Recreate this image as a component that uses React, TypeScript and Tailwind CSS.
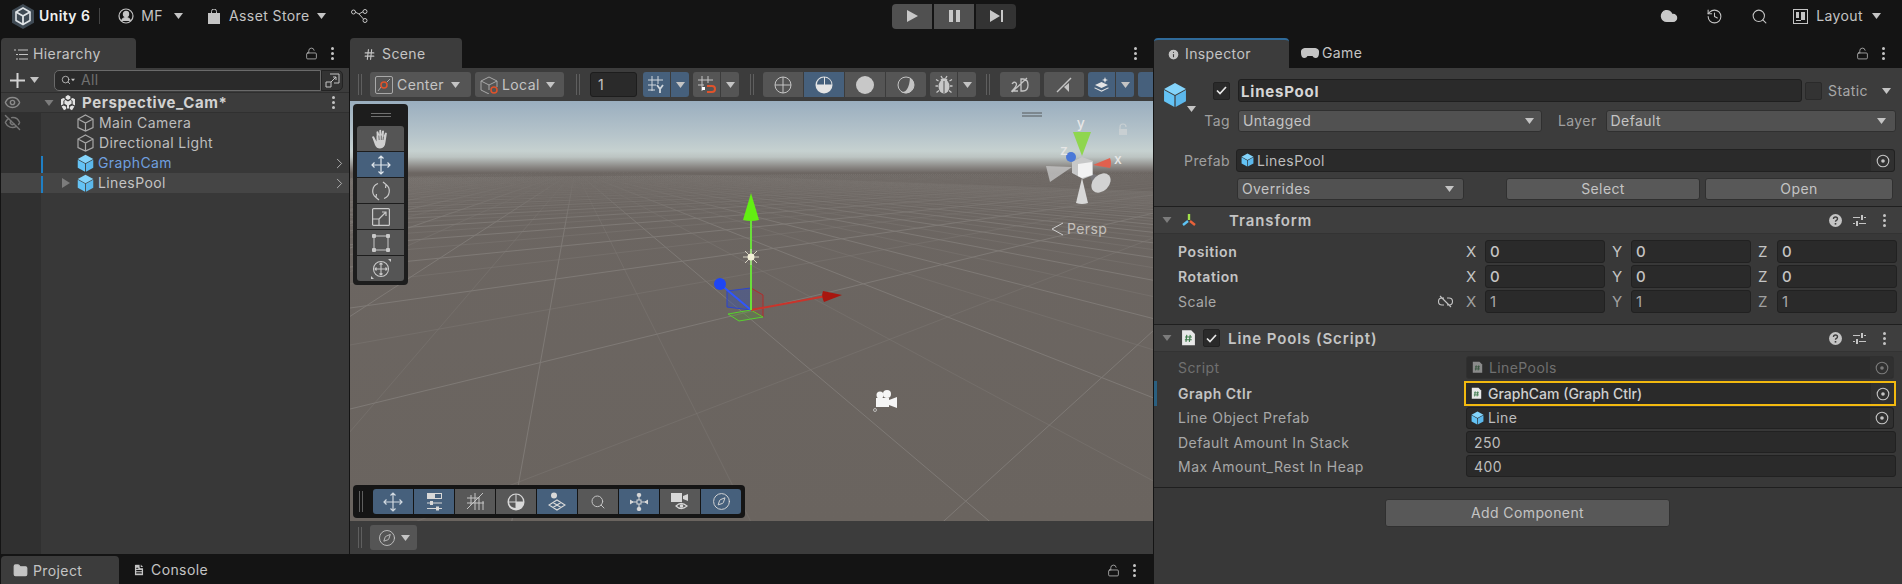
import React from 'react';
import { ChevronRight, Cloud, Compass, Eye, EyeOff, FileText, Folder, Hash, History, Info, LockOpen, Search } from 'lucide-react';

const Caret = ({ color = '#c4c4c4', w = 9 }: { color?: string; w?: number }) => (
  <svg width={w} height={6} viewBox="0 0 9 6" className="shrink-0">
    <path d="M0 0h9L4.5 6z" fill={color} />
  </svg>
);

const Kebab = ({ className = '' }: { className?: string }) => (
  <div className={`flex flex-col gap-[2px] ${className}`}>
    <span className="w-[3px] h-[3px] rounded-full bg-[#c4c4c4]" />
    <span className="w-[3px] h-[3px] rounded-full bg-[#c4c4c4]" />
    <span className="w-[3px] h-[3px] rounded-full bg-[#c4c4c4]" />
  </div>
);

const Handle = ({ className = '' }: { className?: string }) => (
  <div className={`flex gap-[2px] h-[21px] shrink-0 ${className}`}>
    <span className="w-px bg-[#5f5f5f]" />
    <span className="w-px bg-[#5f5f5f]" />
  </div>
);

const Cube = ({ size = 16 }: { size?: number }) => (
  <svg width={size} height={size * 1.08} viewBox="0 0 24 26" className="shrink-0">
    <path d="M12 1l11 6-11 6L1 7z" fill="#84d4fb" />
    <path d="M1 8l10.4 5.7V25L1 19.4z" fill="#64c3f5" />
    <path d="M23 8l-10.4 5.7V25L23 19.4z" fill="#5cb8ec" />
  </svg>
);

const CubeOutline = () => (
  <svg width={17} height={18} viewBox="0 0 17 18" fill="none" stroke="#a8a8a8" strokeWidth="1.2" className="shrink-0">
    <path d="M8.5 1L16 5v8.5L8.5 17 1 13.5V5zM1 5l7.5 4L16 5M8.5 9v8" />
  </svg>
);

const UnityMark = ({ size = 16, color = '#e4e4e4' }: { size?: number; color?: string }) => (
  <svg width={size} height={size} viewBox="0 0 16 16" className="shrink-0" fill={color}>
    <path d="M8 0l2.4 1.4v2.2L8 5 5.6 3.6V1.4zM1 4.2l2.3-1.3 2 1.1L3.4 6v3.2L1 10.5zM15 4.2l-2.3-1.3-2 1.1L12.6 6v3.2l2.4 1.3zM8 6.6l2.6-1.5 1 .6v3l-2.6 1.5v3l-1 .6-1-.6v-3L4.4 8.7v-3l1-.6zM1.6 11.6l2.2-1.2 2.4 1.4v2.3L4 15.3zM14.4 11.6l-2.2-1.2-2.4 1.4v2.3l2.2 1.2z" />
  </svg>
);

const UnityLogo = () => (
  <svg width={22} height={25} viewBox="0 0 22 25" className="shrink-0">
    <path d="M11 0l11 6.2v12.6L11 25 0 18.8V6.2z" fill="#3f4a54" />
    <path d="M11 4l7 4v8.5l-7 4-7-4V8z" fill="none" stroke="#dfe3e6" strokeWidth="1.6" />
    <path d="M4 8l7 4 7-4M11 12v8.5" fill="none" stroke="#dfe3e6" strokeWidth="1.8" />
  </svg>
);

const ScriptIcon = ({ size = 14, dim = false }: { size?: number; dim?: boolean }) => (
  <svg width={size} height={size * 1.15} viewBox="0 0 14 16" className={`shrink-0 ${dim ? 'opacity-50' : ''}`}>
    <path d="M1 1h8.5L13 4.5V15H1z" fill="#e8e8e8" />
    <path d="M5.4 5.5l-.8 6.5M8.6 5.5L7.8 12M3.8 7.4h6.4M3.6 10h6.4" stroke="#3d7a4a" strokeWidth="1.1" fill="none" />
  </svg>
);

const Target = ({ dim = false }: { dim?: boolean }) => (
  <div className="w-[23px] self-stretch bg-[#303030] flex items-center justify-center shrink-0 rounded-r-[3px]">
    <svg width={14} height={14} viewBox="0 0 14 14" className={dim ? 'opacity-50' : ''}>
      <circle cx="7" cy="7" r="5.8" fill="none" stroke="#c4c4c4" strokeWidth="1.1" />
      <circle cx="7" cy="7" r="1.8" fill="#c4c4c4" />
    </svg>
  </div>
);

const Check = () => (
  <svg width={11} height={9} viewBox="0 0 11 9" fill="none" stroke="#e8e8e8" strokeWidth="1.7">
    <path d="M1 4.500l3 3 6-6.500" />
  </svg>
);

const Btn = ({ w, blue, children, className = '' }: { w: number; blue?: boolean; children?: React.ReactNode; className?: string }) => (
  <div
    className={`h-[25px] flex items-center justify-center shrink-0 ${blue ? 'bg-[#46607c]' : 'bg-[#555555]'} ${className}`}
    style={{ width: w }}
  >
    {children}
  </div>
);

const HierRow = ({ children, hover, marked }: { children: React.ReactNode; hover?: boolean; marked?: boolean }) => (
  <div className={`h-5 flex ${hover ? 'bg-[#454545]' : ''}`}>
    <div className={`w-[40px] shrink-0 ${hover ? '' : 'bg-[#303030]'}`} />
    <div className={`w-[2px] mt-[3px] shrink-0 ${marked ? 'bg-[#1f7fc4]' : ''}`} />
    <div className="flex-1 flex items-center">{children}</div>
  </div>
);

const ToolCell = ({ blue, children }: { blue?: boolean; children: React.ReactNode }) => (
  <div className={`w-[47px] h-[25px] flex items-center justify-center ${blue ? 'bg-[#46607c]' : 'bg-[#555555]'}`}>{children}</div>
);

const OverlayBtn = ({ blue, children }: { blue?: boolean; children: React.ReactNode }) => (
  <div className={`w-[40px] h-[25px] flex items-center justify-center ${blue ? 'bg-[#46607c]' : 'bg-[#585858]'}`}>{children}</div>
);

const VecField = ({ label, value, strong }: { label: string; value: string; strong?: boolean }) => (
  <div className="flex items-center">
    <span className={`w-[19px] text-[15px] ${strong ? 'text-[#c4c4c4]' : 'text-[#a0a0a0]'}`}>{label}</span>
    <div className={`w-[120px] h-[23px] bg-[#2a2a2a] border border-[#212121] rounded-[3px] flex items-center pl-[4px] text-[15px] ${strong ? 'font-medium text-[#c4c4c4]' : 'text-[#a8a8a8]'}`}>
      {value}
    </div>
  </div>
);

const VecRow = ({ name, strong, x, y, z, extra }: { name: string; strong?: boolean; x: string; y: string; z: string; extra?: React.ReactNode }) => (
  <div className="h-[25px] flex items-center pl-[24px] pr-[5px]">
    <span className={`flex-1 ${strong ? 'font-semibold text-[#c4c4c4] tracking-[0.6px]' : 'text-[#a8a8a8]'}`}>{name}</span>
    {extra}
    <div className="flex gap-[7px]">
      <VecField label="X" value={x} strong={strong} />
      <VecField label="Y" value={y} strong={strong} />
      <VecField label="Z" value={z} strong={strong} />
    </div>
  </div>
);

const CompActions = () => (
  <div className="flex items-center text-[#c4c4c4]">
    <svg width={13} height={13} viewBox="0 0 13 13">
      <circle cx="6.500" cy="6.500" r="6.500" fill="#c4c4c4" />
      <path d="M4.500 5q0-2 2-2t2 1.800q0 1-1 1.500t-1 1.400" fill="none" stroke="#3e3e3e" strokeWidth="1.400" />
      <rect x="5.700" y="9" width="1.600" height="1.600" fill="#3e3e3e" />
    </svg>
    <svg className="ml-[11px]" width={13} height={12} viewBox="0 0 13 12" fill="none" stroke="#c4c4c4">
      <path d="M0 3.500h7M11 3.500h2M0 9.500h2M6 9.500h7" />
      <rect x="8" y="1" width="2" height="5" fill="#c4c4c4" stroke="none" />
      <rect x="3" y="7" width="2" height="5" fill="#c4c4c4" stroke="none" />
    </svg>
    <Kebab className="ml-[17px]" />
  </div>
);

const HandIcon = () => (
  <svg width={18} height={20} viewBox="0 0 18 20" fill="#cfcfcf">
    <path d="M2 7.500l2.500 5V7a1 1 0 0 1 .2-.6L4.500 3a1 1 0 0 1 1.800-.2l1 3V1.500a1 1 0 0 1 1.900 0V6l.9-4a1 1 0 0 1 1.900.4L11.500 7.500 13 4a1 1 0 0 1 1.800.8L13.500 13q-.5 6-5.500 6.500-3.500 0-5-3.500L.5 9a1 1 0 0 1 1.500-1.500z" />
    <path d="M6.800 6.500l.4 4.500M9.300 6.500V11M11.500 7.500L11 11" stroke="#555" strokeWidth="0.8" fill="none" />
  </svg>
);

const BugIcon = () => (
  <svg width={18} height={19} viewBox="0 0 18 19" fill="#c8c8c8" stroke="#c8c8c8">
    <ellipse cx="9" cy="11.500" rx="5.500" ry="7" stroke="none" />
    <path d="M5.500 4.500q3.500-2.500 7 0L12 6H6z" stroke="none" />
    <path d="M6 1l1.500 2.500M12 1l-1.500 2.500M3.500 6L1 4.500M14.500 6L17 4.500M3 11H.5M15 11h2.500M4 15.500l-2.500 2M14 15.500l2.500 2" fill="none" strokeWidth="1.300" />
    <path d="M9 6v12" stroke="#555" fill="none" />
  </svg>
);

// ground grid: two families of lines, each through its own vanishing point
const familyA = Array.from({ length: 81 }, (_, i) => ({ s: -0.18 + (i - 40) * 0.68, major: i % 2 === 0 }));
const familyB = Array.from({ length: 80 }, (_, i) => ({ t: 1.1 + i * 1.5, major: i % 2 === 0 }));

const SceneArt = () => (
  <svg className="absolute inset-0 w-full h-full" viewBox="350 101 803 420">
    <defs>
      <linearGradient id="fade" gradientUnits="userSpaceOnUse" x1="0" y1="172" x2="0" y2="225">
        <stop offset="0" stopColor="#7e7975" stopOpacity="0" />
        <stop offset="1" stopColor="#7e7975" stopOpacity="1" />
      </linearGradient>
    </defs>
    {familyA.map((l, i) => (
      <line key={i} x1={575} y1={170.5} x2={575 + l.s * 360} y2={530} stroke="url(#fade)" strokeOpacity={l.major ? 1 : 0.45} />
    ))}
    {familyB.map((l, i) => (
      <line key={i} x1={1330} y1={170} x2={300} y2={170 + 1030 / l.t} stroke="url(#fade)" strokeOpacity={l.major ? 1 : 0.45} />
    ))}

    {/* move gizmo */}
    <path d="M727 291l24-3v22l-24-3z" fill="#3c54a8" fillOpacity="0.45" stroke="#2b45d0" />
    <path d="M751 288l12 7v22l-12-7z" fill="#a03c3c" fillOpacity="0.25" stroke="#b02c2c" />
    <path d="M728 314l23-4 12 7-24 4z" fill="#5f8f3c" fillOpacity="0.35" stroke="#58d030" />
    <line x1="751" y1="310" x2="720" y2="284" stroke="#2f56ff" strokeWidth="2" />
    <circle cx="720" cy="284" r="6" fill="#1f46f5" />
    <line x1="751" y1="310" x2="826" y2="296" stroke="#c9342b" strokeWidth="2" />
    <path d="M823 291q-2 5 1 11 l18-7z" fill="#a8160f" />
    <line x1="751" y1="310" x2="751" y2="220" stroke="#69df3a" strokeWidth="2" />
    <path d="M751 193l-8 27q8 2 16 0z" fill="#62ee12" />
    <g stroke="#d8d4c4" strokeWidth="1">
      <path d="M751 249v16M743 257h16M745 251l12 12M757 251l-12 12" />
    </g>
    <circle cx="751" cy="257" r="3.5" fill="#f3f0d8" />

    {/* camera gizmo */}
    <path d="M876 398h13v9h-13z M889 400l8-3v11l-8-3z" fill="#f5f5f5" />
    <circle cx="880" cy="395" r="3.5" fill="#f5f5f5" />
    <circle cx="887" cy="394" r="4" fill="#f5f5f5" />
    <circle cx="875" cy="410" r="1.5" fill="none" stroke="#ddd" strokeWidth="0.7" />

    {/* orientation gizmo */}
    <path d="M1022 113h20M1022 116h20" stroke="#55585a" strokeWidth="1" />
    <path d="M1046 166l26 1-22 15z" fill="#c4c4c4" fillOpacity="0.8" />
    <path d="M1082 178l-6 25q6 2 12 0z" fill="#d8d8d8" />
    <path d="M1088 172l7 16 12-9z" fill="#77767a" />
    <ellipse cx="1101" cy="183" rx="11" ry="8" fill="#d2d2d2" transform="rotate(-45 1101 183)" />
    <path d="M1072 162l10-5 11 4v14l-10 4-11-6z" fill="#c7c8c8" />
    <path d="M1078 164l14-2v13l-10 3-4-2z" fill="#f2f2f2" />
    <path d="M1073 132h18l-9 24z" fill="#8fd64f" />
    <path d="M1093 165l17-7q2 5 0 10z" fill="#e2604e" />
    <circle cx="1071" cy="157" r="5" fill="#4a78d8" />
    <text x="1081" y="128" fontSize="14" fontWeight="500" textAnchor="middle" fill="#e6e6e6">y</text>
    <text x="1118" y="164" fontSize="14" fontWeight="500" textAnchor="middle" fill="#e6e6e6">x</text>
    <text x="1064" y="155" fontSize="14" fontWeight="500" textAnchor="middle" fill="#e6e6e6">z</text>
    <path d="M1120 129v-2a3 3 0 0 1 6 0" fill="none" stroke="#c8cfd2" strokeWidth="1.2" />
    <rect x="1119" y="129" width="8" height="6" fill="#c8cfd2" />
    <path d="M1063 223l-11 6 11 6" fill="none" stroke="#cfcfcf" />
    <text x="1067" y="234" fontSize="14" fill="#c4c0bc">Persp</text>
  </svg>
);

const iconGray = '#c8c8c8';

export default function App() {
  return (
    <div className="w-[1902px] h-[584px] overflow-hidden bg-[#141414] flex flex-col text-[14px] tracking-[0.4px] text-[#c4c4c4] [font-family:Inter,sans-serif] leading-none">
      {/* top bar */}
      <div className="h-[38px] flex items-center shrink-0 relative -top-[3px]">
        <div className="w-[892px] flex items-center pl-[12px] shrink-0">
          <UnityLogo />
          <span className="ml-[5px] font-semibold text-[#f0f0f0]">Unity 6</span>
          <span className="ml-[9px] w-px h-[16px] bg-[#444]" />
          <svg className="ml-[18px]" width={16} height={16} viewBox="0 0 16 16" fill="none" stroke="#c4c4c4" strokeWidth="1.2">
            <circle cx="8" cy="8" r="7" />
            <circle cx="8" cy="6" r="2.6" fill="#c4c4c4" />
            <path d="M3.5 13q1-3.5 4.5-3.5t4.5 3.5" fill="#c4c4c4" />
          </svg>
          <span className="ml-[7px]">MF</span>
          <span className="ml-[11px]"><Caret /></span>
          <svg className="ml-[25px]" width={12} height={15} viewBox="0 0 12 15">
            <path d="M0 4h12v11H0z" fill="#c4c4c4" />
            <path d="M3.5 5V2.5a2.5 2.5 0 0 1 5 0V5" fill="none" stroke="#c4c4c4" />
          </svg>
          <span className="ml-[9px]">Asset Store</span>
          <span className="ml-[7px]"><Caret /></span>
          <svg className="ml-[25px]" width={17} height={14} viewBox="0 0 17 14" fill="none" stroke="#c4c4c4">
            <circle cx="2.5" cy="3" r="2" />
            <circle cx="14" cy="2.5" r="2" />
            <circle cx="14" cy="11.5" r="2" />
            <path d="M4.5 3.2L8 5l4 -2.3M8 5l4.5 5" />
          </svg>
        </div>
        <div className="flex gap-[2px] shrink-0">
          <div className="w-[40px] h-[25px] bg-[#505050] rounded-l-[4px] flex items-center justify-center">
            <svg width={11} height={12} viewBox="0 0 11 12"><path d="M0 0l11 6-11 6z" fill={iconGray} /></svg>
          </div>
          <div className="w-[40px] h-[25px] bg-[#505050] flex items-center justify-center">
            <svg width={11} height={12} viewBox="0 0 11 12"><path d="M0 0h4v12H0zM7 0h4v12H7z" fill={iconGray} /></svg>
          </div>
          <div className="w-[40px] h-[25px] bg-[#333333] rounded-r-[4px] flex items-center justify-center">
            <svg width={13} height={12} viewBox="0 0 13 12"><path d="M0 0l10 6-10 6zM11 0h2v12h-2z" fill={iconGray} /></svg>
          </div>
        </div>
        <div className="flex-1 flex items-center justify-end pr-[21px]">
          <Cloud size={18} fill={iconGray} stroke={iconGray} />
          <History className="ml-[28px]" size={17} strokeWidth={1.5} />
          <Search className="ml-[28px]" size={17} strokeWidth={1.5} />
          <svg className="ml-[25px]" width={15} height={15} viewBox="0 0 15 15" fill="none" stroke="#c4c4c4">
            <rect x="0.5" y="0.5" width="14" height="14" />
            <path d="M3 3h3v6H3zM8 3h4v8H8zM3 11h5v1H3z" fill="#c4c4c4" stroke="none" />
          </svg>
          <span className="ml-[8px]">Layout</span>
          <span className="ml-[9px]"><Caret /></span>
        </div>
      </div>

      {/* panels */}
      <div className="flex-1 flex min-h-0">
        <div className="w-[1153px] shrink-0 flex flex-col">
          <div className="flex-1 flex min-h-0">
            {/* hierarchy column */}
            <div className="w-[348px] ml-px shrink-0 flex flex-col">
              <div className="h-[30px] flex items-center shrink-0">
                <div className="w-[135px] h-full bg-[#3c3c3c] rounded-t-[4px] flex items-center pl-[13px] pt-[2px]">
                  <svg width={14} height={11} viewBox="0 0 14 11" stroke="#c4c4c4" fill="none">
                    <path d="M0 1h2M4 1h10M2 5.5h2M5 5.5h9M2 10h2M5 10h9" />
                  </svg>
                  <span className="ml-[5px]">Hierarchy</span>
                </div>
                <LockOpen className="ml-[169px]" size={13} strokeWidth={1.4} />
                <Kebab className="ml-[13px]" />
              </div>
              <div className="h-[25px] bg-[#3c3c3c] flex items-center shrink-0 border-b border-[#2e2e2e]">
                <svg className="ml-[8px]" width={17} height={17} viewBox="0 0 17 17"><path d="M7.5 1h2v6.5H16v2H9.5V16h-2V9.5H1v-2h6.5z" fill="#d2d2d2" /></svg>
                <span className="ml-[4px]"><Caret /></span>
                <div className="ml-[15px] w-[267px] h-[21px] bg-[#2a2a2a] border border-[#6a6a6a] rounded-l-[5px] flex items-center pl-[6px]">
                  <Search size={10} />
                  <Caret w={4} />
                  <span className="ml-[6px] text-[#707070]">All</span>
                </div>
                <div className="w-[22px] h-[21px] bg-[#333] border border-[#232323] rounded-r-[5px] flex items-center justify-center">
                  <svg width={15} height={15} viewBox="0 0 15 15" fill="none" stroke="#c4c4c4">
                    <path d="M5 1h9v9H9M1 9h5v5H1zM6 9l5-5M8 4h3v3" />
                  </svg>
                </div>
              </div>
              <div className="flex-1 bg-[#383838] flex flex-col">
                <div className="h-5 flex bg-[#3c3c3c] border-b border-[#303030] items-center">
                  <div className="w-[41px] shrink-0 flex justify-center relative -left-[9px]"><Eye size={17} className="text-[#8a8a8a]" /></div>
                  <div className="ml-[2px]"><Caret color="#7c7c7c" w={10} /></div>
                  <span className="ml-[6px]"><UnityMark /></span>
                  <span className="ml-[6px] font-bold text-[#d2d2d2] text-[15px] tracking-[0.6px]">Perspective_Cam*</span>
                  <Kebab className="ml-auto mr-[14px]" />
                </div>
                <div className="h-5 flex">
                  <div className="w-[40px] shrink-0 bg-[#303030] flex justify-center">
                    <EyeOff size={17} className="text-[#777] relative -left-[9px] top-[1px]" />
                  </div>
                  <div className="flex-1 flex items-center pl-[36px]"><CubeOutline /><span className="ml-[5px] text-[#bdbdbd]">Main Camera</span></div>
                </div>
                <div className="h-5 flex">
                  <div className="w-[40px] shrink-0 bg-[#303030]" />
                  <div className="flex-1 flex items-center pl-[36px]"><CubeOutline /><span className="ml-[5px] text-[#bdbdbd]">Directional Light</span></div>
                </div>
                <HierRow marked>
                  <span className="ml-[34px]"><Cube size={17} /></span>
                  <span className="ml-[4px] text-[#6f9fdf]">GraphCam</span>
                  <ChevronRight className="ml-auto mr-[1px]" size={17} strokeWidth={1.4} color="#b0b0b0" />
                </HierRow>
                <HierRow hover marked>
                  <span className="ml-[19px]">
                    <svg width={8} height={10} viewBox="0 0 8 10"><path d="M0 0l8 5-8 5z" fill="#7c7c7c" /></svg>
                  </span>
                  <span className="ml-[7px]"><Cube size={17} /></span>
                  <span className="ml-[4px] text-[#c4c4c4]">LinesPool</span>
                  <ChevronRight className="ml-auto mr-[1px]" size={17} strokeWidth={1.4} color="#b0b0b0" />
                </HierRow>
                <div className="flex-1 flex"><div className="w-[40px] bg-[#303030]" /></div>
              </div>
            </div>

            {/* scene column */}
            <div className="w-[803px] ml-px shrink-0 flex flex-col">
              <div className="h-[30px] flex items-center shrink-0">
                <div className="w-[112px] h-full bg-[#3c3c3c] rounded-t-[4px] flex items-center pl-[13px] pt-[2px]">
                  <Hash size={13} />
                  <span className="ml-[6px]">Scene</span>
                </div>
                <Kebab className="ml-[672px]" />
              </div>
              <div className="h-[33px] bg-[#3c3c3c] flex items-center shrink-0 pl-[8px] overflow-hidden">
                <Handle />
                <Btn w={101} className="ml-[8px] rounded-[3px] justify-start pl-[5px]">
                  <svg width={18} height={18} viewBox="0 0 18 18" fill="none">
                    <rect x="0.5" y="0.5" width="17" height="17" rx="1.5" stroke="#a8a8a8" />
                    <path d="M3 15l3-4M12 6l3-3" stroke="#a8a8a8" />
                    <circle cx="9" cy="9" r="3" stroke="#e0532b" strokeWidth="1.5" />
                  </svg>
                  <span className="ml-[4px]">Center</span>
                  <span className="ml-[7px]"><Caret /></span>
                </Btn>
                <Btn w={89} className="ml-[4px] rounded-[3px] justify-start pl-[5px]">
                  <svg width={19} height={18} viewBox="0 0 19 18" fill="none" stroke="#a8a8a8">
                    <path d="M9 1l8 4v6M1 5l8-4M1 5v9l8 4M1 5l8 4 8-4M9 9v5" />
                    <circle cx="14" cy="14" r="3" stroke="#e0532b" strokeWidth="1.5" />
                  </svg>
                  <span className="ml-[3px]">Local</span>
                  <span className="ml-[6px]"><Caret /></span>
                </Btn>
                <Handle className="ml-[12px]" />
                <div className="ml-[10px] w-[47px] h-[25px] shrink-0 bg-[#2a2a2a] border border-[#1d1d1d] rounded-[3px] flex items-center pl-[7px]">1</div>
                <Btn w={27} blue className="ml-[6px] rounded-l-[3px]">
                  <svg width={19} height={19} viewBox="0 0 19 19" fill="none" stroke="#d0d6dc">
                    <path d="M5 1v15M11 1v8M1 5h15M1 10h8M1 15h7" />
                    <path d="M10 10l3 4 3-4M13 14v4" strokeWidth="1.8" />
                  </svg>
                </Btn>
                <Btn w={18} blue className="ml-px rounded-r-[3px]"><Caret /></Btn>
                <Btn w={27} className="ml-[4px] rounded-l-[3px]">
                  <svg width={19} height={19} viewBox="0 0 19 19" fill="none" stroke="#c4c4c4">
                    <path d="M5 1v15M11 1v7M1 5h15M1 10h6" />
                    <path d="M10 11h5a2.5 2.5 0 0 1 0 6h-5" stroke="#e0532b" strokeWidth="2" />
                    <rect x="5" y="12" width="3" height="3" fill="#fff" stroke="none" />
                  </svg>
                </Btn>
                <Btn w={18} className="ml-px rounded-r-[3px]"><Caret /></Btn>
                <Handle className="ml-[11px]" />
                <Btn w={40} className="ml-[9px] rounded-l-[3px]">
                  <svg width={18} height={18} viewBox="0 0 18 18" fill="none" stroke="#c4c4c4"><circle cx="9" cy="9" r="8" /><path d="M9 1v16M1 9h16" /></svg>
                </Btn>
                <Btn w={40} blue className="ml-px">
                  <svg width={18} height={18} viewBox="0 0 18 18"><circle cx="9" cy="9" r="8.5" fill="#e4e4e4" /><path d="M9 1.5v7H2a7 7 0 0 1 7-7z" fill="#46607c" /><path d="M10 1.5a7 7 0 0 1 6.5 7H10z" fill="#46607c" /></svg>
                </Btn>
                <Btn w={40} className="ml-px"><span className="w-[18px] h-[18px] rounded-full bg-[#c8c8c8]" /></Btn>
                <Btn w={40} className="ml-px rounded-r-[3px]">
                  <svg width={18} height={18} viewBox="0 0 18 18"><circle cx="9" cy="9" r="8" fill="none" stroke="#c4c4c4" /><path d="M13 1.5a8 8 0 0 1-9 14.5q8 1 9-14.5z" fill="#c4c4c4" /></svg>
                </Btn>
                <Btn w={27} className="ml-[4px] rounded-l-[3px]"><BugIcon /></Btn>
                <Btn w={18} className="ml-px rounded-r-[3px]"><Caret /></Btn>
                <Handle className="ml-[10px]" />
                <Btn w={40} className="ml-[10px] rounded-[3px]">
                  <svg width={18} height={16} viewBox="0 0 18 16" fill="none" stroke="#c4c4c4" strokeWidth="1.3">
                    <path d="M1 7q2-3 4-1t-4 8h6M10 2h2q5 0 5 6t-5 6h-2zM1 15L16 1" />
                  </svg>
                </Btn>
                <Btn w={40} className="ml-[4px] rounded-[3px]">
                  <svg width={16} height={16} viewBox="0 0 16 16" fill="#c4c4c4" stroke="#c4c4c4">
                    <path d="M1 15L15 1" strokeWidth="1.4" />
                    <path d="M8 10l5-4v9z" stroke="none" />
                  </svg>
                </Btn>
                <Btn w={27} blue className="ml-[4px] rounded-l-[3px]">
                  <svg width={17} height={15} viewBox="0 0 17 15" fill="#e4e4e4">
                    <path d="M8.5 5L15 8l-6.5 3L2 8zM2 10.5l6.5 3 6.5-3 1 .6-7.5 3.6-7.5-3.6z" />
                    <path d="M12 0l.8 2.2L15 3l-2.2.8L12 6l-.8-2.2L9 3l2.2-.8z" />
                  </svg>
                </Btn>
                <Btn w={18} blue className="ml-px rounded-r-[3px]"><Caret /></Btn>
                <Btn w={27} blue className="ml-[4px] rounded-l-[3px]" />
              </div>
              <div className="h-[420px] shrink-0 relative overflow-hidden bg-[linear-gradient(180deg,#9aaebf_0px,#b7c5cb_35px,#c6d1d0_50px,#bcc4c2_56px,#8a8784_66px,#6c6662_72px,#6a645f_100%)]">
                <SceneArt />
                {/* tools overlay */}
                <div className="absolute left-[3px] top-[3px] w-[55px] h-[181px] bg-[#1d1d1d] rounded-[4px] flex flex-col items-center">
                  <div className="h-[22px] flex flex-col justify-center gap-[2px]">
                    <span className="block w-[20px] h-px bg-[#707070]" />
                    <span className="block w-[20px] h-px bg-[#707070]" />
                  </div>
                  <div className="flex flex-col gap-px rounded-[3px] overflow-hidden">
                    <ToolCell><HandIcon /></ToolCell>
                    <ToolCell blue>
                      <svg width={20} height={20} viewBox="0 0 20 20" fill="none" stroke="#dfe6ec" strokeWidth="1.2">
                        <path d="M10 1v18M1 10h18M7.5 3.5L10 1l2.5 2.5M7.5 16.5L10 19l2.5-2.5M3.5 7.5L1 10l2.5 2.5M16.5 7.5L19 10l-2.5 2.5" />
                      </svg>
                    </ToolCell>
                    <ToolCell>
                      <svg width={20} height={20} viewBox="0 0 20 20" fill="none" stroke="#c8c8c8" strokeWidth="1.2">
                        <path d="M15 3.5a8 8 0 0 1-2 14M5 16.5a8 8 0 0 1 2-14M12 1l3 2.5-.5 3.5M8 19l-3-2.5.5-3.5" />
                      </svg>
                    </ToolCell>
                    <ToolCell>
                      <svg width={18} height={18} viewBox="0 0 18 18" fill="none" stroke="#c8c8c8" strokeWidth="1.2">
                        <rect x="0.6" y="0.6" width="16.8" height="16.8" rx="1" />
                        <path d="M1 11h6v6M7 11l7-7M10 4h4v4" />
                      </svg>
                    </ToolCell>
                    <ToolCell>
                      <svg width={18} height={18} viewBox="0 0 18 18" fill="#c8c8c8">
                        <path d="M2 2v14M16 2v14M2 2h14M2 16h14" stroke="#c8c8c8" strokeWidth="1" />
                        <rect x="0" y="0" width="4" height="4" rx="1" /><rect x="14" y="0" width="4" height="4" rx="1" />
                        <rect x="0" y="14" width="4" height="4" rx="1" /><rect x="14" y="14" width="4" height="4" rx="1" />
                      </svg>
                    </ToolCell>
                    <ToolCell>
                      <svg width={20} height={20} viewBox="0 0 20 20" fill="none" stroke="#c8c8c8" strokeWidth="1.1">
                        <circle cx="10" cy="10" r="7.5" />
                        <path d="M10 4v12M4 10h12M8.5 5.5L10 4l1.5 1.5M8.5 14.5L10 16l1.5-1.5M5.5 8.5L4 10l1.5 1.5M14.5 8.5L16 10l-1.5 1.5" />
                        <path d="M0 20v-3l3 3zM20 0v3l-3-3z" fill="#c8c8c8" stroke="none" />
                      </svg>
                    </ToolCell>
                  </div>
                </div>
                {/* view options overlay */}
                <div className="absolute left-[3px] bottom-[3px] w-[392px] h-[33px] bg-[#151515] rounded-[4px] flex items-center pl-[6px]">
                  <Handle />
                  <div className="ml-[10px] flex gap-px rounded-[3px] overflow-hidden">
                    <OverlayBtn blue>
                      <svg width={20} height={20} viewBox="0 0 20 20" fill="none" stroke="#d0d8e0" strokeWidth="1.2">
                        <path d="M10 1v18M1 10h18M7.5 3.5L10 1l2.5 2.5M7.5 16.5L10 19l2.5-2.5M3.5 7.5L1 10l2.5 2.5M16.5 7.5L19 10l-2.5 2.5" />
                      </svg>
                    </OverlayBtn>
                    <OverlayBtn blue>
                      <svg width={15} height={18} viewBox="0 0 15 18" fill="#d8d8d8">
                        <path d="M0 0h15v6H0z" /><path d="M8 1h6v4H8z" fill="#46607c" />
                        <path d="M0 10h15M0 15.5h15" stroke="#d8d8d8" strokeWidth="1.2" />
                        <rect x="3" y="8" width="3" height="4" /><rect x="9" y="13.5" width="3" height="4" />
                      </svg>
                    </OverlayBtn>
                    <OverlayBtn>
                      <svg width={19} height={19} viewBox="0 0 19 19" fill="none" stroke="#c4c4c4">
                        <path d="M5 3v10M9 1v17M13 5v13M17 9v9M1 6h12M1 11h17M1 17L17 1" />
                      </svg>
                    </OverlayBtn>
                    <OverlayBtn>
                      <svg width={18} height={18} viewBox="0 0 18 18"><circle cx="9" cy="9" r="8.5" fill="#d8d8d8" /><path d="M8.5 1.5v7H2a7 7 0 0 1 6.5-7zM9.5 1.5a7 7 0 0 1 6.5 7H9.5zM2 9.5h6.5V15A7 7 0 0 1 2 9.5z" fill="#585858" /></svg>
                    </OverlayBtn>
                    <OverlayBtn blue>
                      <svg width={18} height={19} viewBox="0 0 18 19" fill="none" stroke="#d8d8d8" strokeWidth="1.2">
                        <circle cx="6" cy="3.5" r="3" fill="#d8d8d8" stroke="none" />
                        <path d="M9 8l8 5-8 5-8-5zM5 10.5l8 5M13 10.5l-8 5" />
                      </svg>
                    </OverlayBtn>
                    <OverlayBtn><Search size={16} strokeWidth={1.5} /></OverlayBtn>
                    <OverlayBtn blue>
                      <svg width={18} height={18} viewBox="0 0 18 18" fill="#d8d8d8" stroke="#d8d8d8">
                        <rect x="7" y="7" width="4" height="4" fill="none" />
                        <path d="M9 1v6M9 11v6M1 9h6M11 9h6" />
                        <circle cx="9" cy="2" r="1.8" /><circle cx="9" cy="16" r="1.8" /><path d="M0 7v4l3-2zM18 7v4l-3-2z" />
                      </svg>
                    </OverlayBtn>
                    <OverlayBtn>
                      <svg width={18} height={18} viewBox="0 0 18 18" fill="#d8d8d8">
                        <path d="M0 0h11v9H0zM12 3l5-2v7l-5-2z" />
                        <path d="M5 13q5-5 11 0-6 5-11 0z" fill="none" stroke="#d8d8d8" strokeWidth="1.2" />
                        <circle cx="10.5" cy="13" r="1.8" />
                      </svg>
                    </OverlayBtn>
                    <OverlayBtn blue><Compass size={19} strokeWidth={1.2} color="#d8d8d8" /></OverlayBtn>
                  </div>
                </div>
              </div>
              <div className="h-[33px] bg-[#3c3c3c] flex items-center pl-[8px] shrink-0">
                <Handle />
                <Btn w={47} className="ml-[8px] rounded-[3px] gap-[5px]">
                  <Compass size={18} strokeWidth={1.2} />
                  <Caret />
                </Btn>
              </div>
            </div>
          </div>

          {/* project / console strip */}
          <div className="h-[28px] mt-[2px] ml-px flex items-center shrink-0">
            <div className="w-[118px] h-full bg-[#3c3c3c] rounded-t-[4px] flex items-center pl-[12px] pt-[1px]">
              <Folder size={15} fill="#c4c4c4" stroke="#c4c4c4" />
              <span className="ml-[5px]">Project</span>
            </div>
            <FileText className="ml-[13px]" size={14} fill="#c4c4c4" stroke="#141414" />
            <span className="ml-[5px]">Console</span>
            <LockOpen className="ml-[899px]" size={13} strokeWidth={1.4} />
            <Kebab className="ml-[13px]" />
          </div>
        </div>

        {/* inspector column */}
        <div className="w-[748px] ml-px shrink-0 flex flex-col">
          <div className="h-[30px] flex items-center shrink-0">
            <div className="w-[135px] h-full bg-[#3c3c3c] rounded-t-[4px] border-t-2 border-[#2f6a99] flex items-center pl-[13px]">
              <Info size={13} fill="#c4c4c4" stroke="#3c3c3c" />
              <span className="ml-[5px]">Inspector</span>
            </div>
            <svg className="ml-[12px]" width={18} height={10} viewBox="0 0 18 10">
              <path d="M4 0h10a4 4 0 0 1 4 5q0 5-3.500 5-2 0-3-2H6.500q-1 2-3 2Q0 10 0 5a4 4 0 0 1 4-5z" fill="#c4c4c4" />
            </svg>
            <span className="ml-[3px]">Game</span>
            <LockOpen className="ml-[494px]" size={13} strokeWidth={1.4} />
            <Kebab className="ml-[13px]" />
          </div>

          <div className="flex-1 bg-[#383838] flex flex-col">
            {/* object header */}
            <div className="h-[139px] bg-[#3c3c3c] border-b border-[#1f1f1f] flex flex-col shrink-0">
              <div className="h-[23px] mt-[11px] flex items-center shrink-0">
                <span className="ml-[9px] relative top-[4px]">
                  <Cube size={24} />
                  <span className="absolute left-[24px] top-[24px]"><Caret /></span>
                </span>
                <span className="ml-[26px] w-[17px] h-[18px] bg-[#2a2a2a] border border-[#222] rounded-[2px] flex items-center justify-center">
                  <Check />
                </span>
                <div className="ml-[8px] w-[564px] h-[23px] bg-[#2a2a2a] border border-[#1f1f1f] rounded-[3px] flex items-center pl-[2px] pt-[1px] font-bold text-[15px] tracking-[0.8px] text-[#d6d6d6]">LinesPool</div>
                <span className="ml-[3px] w-[17px] h-[18px] bg-[#333] border border-[#2a2a2a] rounded-[2px]" />
                <span className="ml-[6px] text-[#a8a8a8]">Static</span>
                <span className="ml-[14px]"><Caret /></span>
              </div>
              <div className="h-[22px] flex items-center mt-[8px] shrink-0">
                <span className="w-[76px] text-right text-[#a0a0a0]">Tag</span>
                <div className="ml-[8px] w-[304px] h-[22px] bg-[#515151] border border-[#303030] rounded-[3px] flex items-center justify-between px-[4px] pr-[7px]">Untagged<Caret /></div>
                <span className="ml-[16px] text-[#a0a0a0]">Layer</span>
                <div className="ml-[9px] w-[290px] h-[22px] bg-[#515151] border border-[#303030] rounded-[3px] flex items-center justify-between px-[4px] pr-[9px]">Default<Caret /></div>
              </div>
              <div className="h-[23px] flex items-center mt-[17px] shrink-0">
                <span className="w-[76px] text-right text-[#a0a0a0] pt-[1px]">Prefab</span>
                <div className="ml-[6px] w-[659px] h-[23px] bg-[#2a2a2a] border border-[#212121] rounded-[3px] flex items-center pl-[4px]">
                  <Cube size={13} />
                  <span className="ml-[3px] text-[#bdbdbd] pt-[1px]">LinesPool</span>
                  <span className="ml-auto self-stretch flex"><Target /></span>
                </div>
              </div>
              <div className="h-[22px] flex items-center mt-[6px] shrink-0">
                <div className="ml-[83px] w-[227px] h-[22px] bg-[#515151] border border-[#303030] rounded-[3px] flex items-center justify-between pl-[4px] pr-[9px]">Overrides<Caret /></div>
                <div className="ml-[42px] w-[194px] h-[22px] bg-[#585858] border border-[#303030] rounded-[3px] flex items-center justify-center">Select</div>
                <div className="ml-[5px] w-[188px] h-[22px] bg-[#585858] border border-[#303030] rounded-[3px] flex items-center justify-center">Open</div>
              </div>
            </div>

            {/* transform */}
            <div className="h-[27px] bg-[#3e3e3e] border-b border-[#333] flex items-center pl-[8px] pr-[16px] shrink-0">
              <Caret color="#7c7c7c" w={10} />
              <svg className="ml-[9px]" width={16} height={14} viewBox="0 0 16 14" fill="none" strokeWidth="2.400">
                <path d="M8 1v6" stroke="#a2e04a" />
                <path d="M7 8L2 12" stroke="#5ec4f5" />
                <path d="M9 8l5 4" stroke="#e8623a" />
              </svg>
              <span className="ml-[32px] font-semibold text-[15px] tracking-[0.9px]">Transform</span>
              <span className="ml-auto"><CompActions /></span>
            </div>
            <div className="h-[91px] border-b border-[#1f1f1f] pt-[5px] shrink-0">
              <VecRow name="Position" strong x="0" y="0" z="0" />
              <VecRow name="Rotation" strong x="0" y="0" z="0" />
              <VecRow name="Scale" x="1" y="1" z="1" extra={
                <svg className="mr-[13px]" width={15} height={13} viewBox="0 0 15 13" fill="none" stroke="#c4c4c4" strokeWidth="1.1">
                  <path d="M6 3H4a3.500 3.500 0 0 0 0 7h2M9 3h2a3.500 3.500 0 0 1 0 7H9M2 1l11 11" />
                </svg>
              } />
            </div>

            {/* line pools script */}
            <div className="h-[27px] bg-[#3e3e3e] border-b border-[#333] flex items-center pl-[8px] pr-[16px] shrink-0">
              <Caret color="#7c7c7c" w={10} />
              <span className="ml-[9px]"><ScriptIcon size={15} /></span>
              <span className="ml-[7px] w-[17px] h-[18px] bg-[#2a2a2a] border border-[#222] rounded-[2px] flex items-center justify-center">
                <Check />
              </span>
              <span className="ml-[8px] font-semibold text-[15px] tracking-[0.9px]">Line Pools (Script)</span>
              <span className="ml-auto"><CompActions /></span>
            </div>
            <div className="h-[136px] border-b border-[#1f1f1f] pt-[4px] shrink-0 flex flex-col">
              <div className="h-[23px] flex items-center pl-[24px]">
                <span className="w-[288px] text-[#707070]">Script</span>
                <div className="w-[428px] h-[23px] bg-[#2c2c2c] border border-[#303030] rounded-[3px] flex items-center pl-[5px] text-[#707070]">
                  <ScriptIcon size={11} dim />
                  <span className="ml-[6px]">LinePools</span>
                  <span className="ml-auto self-stretch flex"><Target dim /></span>
                </div>
              </div>
              <div className="h-[25px] mt-[2px] flex items-center">
                <span className="w-[3px] h-full bg-[#2a5f80]" />
                <span className="ml-[21px] w-[287px] font-semibold text-[#c4c4c4] tracking-[0.5px]">Graph Ctlr</span>
                <div className="-ml-px w-[432px] h-[25px] bg-[#2a2a2a] border-2 border-[#f2b90f] flex items-center pl-[5px] font-medium text-[#d0d0d0] tracking-[0px]">
                  <ScriptIcon size={11} />
                  <span className="ml-[6px]">GraphCam (Graph Ctlr)</span>
                  <span className="ml-auto self-stretch flex"><Target /></span>
                </div>
              </div>
              <div className="h-[22px] mt-[1px] flex items-center pl-[24px]">
                <span className="w-[288px] text-[#a8a8a8] tracking-[0.5px]">Line Object Prefab</span>
                <div className="w-[428px] h-[22px] bg-[#2a2a2a] border border-[#212121] rounded-[3px] flex items-center pl-[4px] text-[#bdbdbd]">
                  <Cube size={13} />
                  <span className="ml-[4px]">Line</span>
                  <span className="ml-auto self-stretch flex"><Target /></span>
                </div>
              </div>
              <div className="h-[22px] mt-[2px] flex items-center pl-[24px]">
                <span className="w-[288px] pt-[1px] text-[#a8a8a8] tracking-[0.5px]">Default Amount In Stack</span>
                <div className="w-[430px] h-[22px] bg-[#2a2a2a] border border-[#212121] rounded-[3px] flex items-center pl-[7px] pt-[1px] text-[#bdbdbd]">250</div>
              </div>
              <div className="h-[22px] mt-[2px] flex items-center pl-[24px]">
                <span className="w-[288px] pt-[1px] text-[#a8a8a8] tracking-[0.5px]">Max Amount_Rest In Heap</span>
                <div className="w-[430px] h-[22px] bg-[#2a2a2a] border border-[#212121] rounded-[3px] flex items-center pl-[7px] pt-[1px] text-[#bdbdbd]">400</div>
              </div>
            </div>
            <div className="flex pt-[11px] pl-[231px]">
              <div className="w-[285px] h-[28px] bg-[#585858] border border-[#303030] rounded-[3px] flex items-center justify-center">Add Component</div>
            </div>
          </div>
        </div>
      </div>
    </div>
  );
}
